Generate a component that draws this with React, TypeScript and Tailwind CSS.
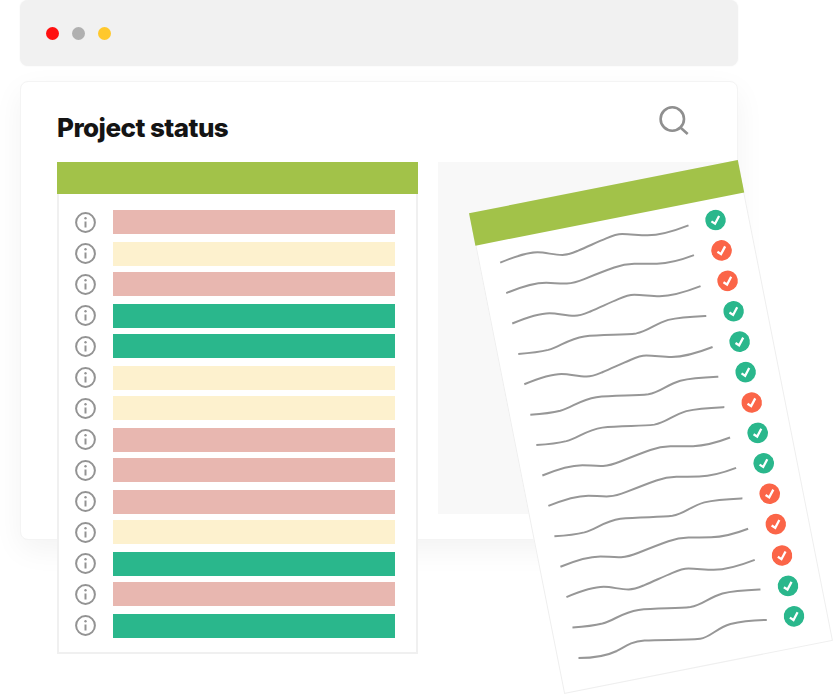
const PINK = 'bg-[#e8b7b0]';
const CREAM = 'bg-[#fdf1ce]';
const GREEN = 'bg-[#2ab78c]';

const bars = [PINK, CREAM, PINK, GREEN, GREEN, CREAM, CREAM, PINK, PINK, PINK, CREAM, GREEN, PINK, GREEN];

// hand-drawn lines, traced level with the screen and turned back by the paper's tilt in <Wave>
const WAVE_A = 'M0 0C12 -5 25 -10.3 37.3 -10.3C46 -10.3 53 -7.7 62.3 -7.7C68 -7.7 72 -9.5 78 -12C88 -16.3 97 -20.5 106 -24.3C111 -26.5 116 -28.7 122 -28.7C131 -28.7 138 -27.3 147.3 -27.3C162 -27.3 176 -32.5 188.3 -37.3';
const WAVE_B = 'M0 0C12 -0.8 22 -2 30 -4C42 -7.5 50 -15 66 -17.5C84 -20 104 -18.5 118 -20.5C130 -22.5 136 -30 150 -34C162 -37 176 -37.5 188 -38';
const WAVE_C = 'M0 0C12 -5 26 -10.3 40 -10.3C47 -10.3 53 -9.3 60.7 -9.6C66 -9.8 72 -11.5 78 -14C88 -18 98 -22 108 -25.5C114 -27.6 120 -29 128 -29.2C135 -29.4 143 -29.2 150.7 -29.4C164 -29.8 176 -33.5 187.7 -38';
const WAVE_D = 'M0 0C14 0 28 -2 38.3 -7C46 -11 52 -16.5 66 -17.5C84 -18.6 106 -17.5 121.7 -19.3C132 -20.6 138 -30 152 -34C164 -37 176 -37.8 188.3 -38';

const rows = [
  { wave: WAVE_A, ok: true },
  { wave: WAVE_C, ok: false },
  { wave: WAVE_A, ok: false },
  { wave: WAVE_B, ok: true },
  { wave: WAVE_A, ok: true },
  { wave: WAVE_B, ok: true },
  { wave: WAVE_B, ok: false },
  { wave: WAVE_C, ok: true },
  { wave: WAVE_C, ok: true },
  { wave: WAVE_B, ok: false },
  { wave: WAVE_C, ok: false },
  { wave: WAVE_A, ok: false },
  { wave: WAVE_B, ok: true },
  { wave: WAVE_D, ok: true },
];

const InfoIcon = () => (
  <svg width="21" height="21" viewBox="0 0 21 21" fill="none" stroke="#939393" strokeWidth="2" className="block">
    <circle cx="10.5" cy="10.5" r="9.4" />
    <path d="M10.5 9.5V15.5" />
    <circle cx="10.5" cy="6.3" r="1.2" fill="#939393" stroke="none" />
  </svg>
);

const SearchIcon = () => (
  <svg width="32" height="32" viewBox="0 0 32 32" fill="none" stroke="#8f8f8f" strokeWidth="2.6" className="block">
    <circle cx="14.3" cy="13" r="11.7" />
    <path d="M22.7 21.7L29.7 28" />
  </svg>
);

const Check = ({ ok }: { ok: boolean }) => (
  <svg width="21" height="21" viewBox="0 0 21 21" fill="none" className="block shrink-0">
    <circle cx="10.5" cy="10.5" r="10.3" fill={ok ? '#2ab78c' : '#fb6548'} />
    <path d="M6.2 11L9.3 14L14.8 7.2" stroke="#fff" strokeWidth="2.3" />
  </svg>
);

const Wave = ({ d }: { d: string }) => (
  <svg width="192" height="24" viewBox="0 0 192 24" fill="none" stroke="#979797" strokeWidth="2" className="block shrink-0 overflow-visible">
    <path d={d} transform="translate(0 11.5) rotate(11.2)" />
  </svg>
);

export default function App() {
  return (
    <div className="relative w-[834px] h-[696px] overflow-hidden bg-white font-['Inter',sans-serif]">
      <div className="flex flex-col w-[718px] ml-[20px] gap-[15px]">
        <div className="flex items-center gap-[13px] h-[66px] pl-[26px] rounded-lg bg-[#f1f1f1] shadow-[0_0_2px_rgba(0,0,0,0.06)]">
          <span className="w-[13px] h-[13px] rounded-full bg-[#ff1010]" />
          <span className="w-[13px] h-[13px] rounded-full bg-[#b0b0b0]" />
          <span className="w-[13px] h-[13px] rounded-full bg-[#ffc82c]" />
        </div>

        <div className="h-[459px] pl-[36px] pr-[47px] pt-[23px] rounded-lg bg-white border border-[#f4f4f4] shadow-[0_10px_30px_rgba(0,0,0,0.05)]">
          <div className="flex items-center justify-between h-[34px] mb-[23px]">
            <h1 className="text-[26px] leading-[34px] font-extrabold text-[#141414] tracking-[-0.55px] mt-[12px]">Project status</h1>
            <SearchIcon />
          </div>

          <div className="flex items-start gap-[20px]">
            <div className="w-[361px] h-[492px] shrink-0 bg-white border-2 border-t-0 border-[#f0f0f0]">
              <div className="h-[32px] -mx-[2px] bg-[#a2c249]" />
              <div className="flex pt-[16px] pl-[16px]">
                <div className="flex flex-col gap-[10px] pt-[2px] w-[38px]">
                  {bars.map((_, i) => (
                    <InfoIcon key={i} />
                  ))}
                </div>
                <div className="flex flex-col">
                  {bars.map((c, i) => (
                    <div key={i} className={`w-[282px] h-[24px] odd:mb-[8px] even:mb-[6px] ${c}`} />
                  ))}
                </div>
              </div>
            </div>
            <div className="w-[292px] h-[352px] shrink-0 bg-[#f8f8f8]" />
          </div>
        </div>
      </div>

      <div className="absolute left-[514px] top-[182px] w-[274px] h-[490px] bg-white border border-[#efefef] rotate-[-11.2deg]">
        <div className="h-[33px] -mx-px -mt-px bg-[#a2c249]" />
        <div className="flex flex-col pt-[6px] pl-[20px]">
          {rows.map((r, i) => (
            <div key={i} className="flex items-center gap-[17px] h-[31.05px]">
              <Wave d={r.wave} />
              <Check ok={r.ok} />
            </div>
          ))}
        </div>
      </div>
    </div>
  );
}
